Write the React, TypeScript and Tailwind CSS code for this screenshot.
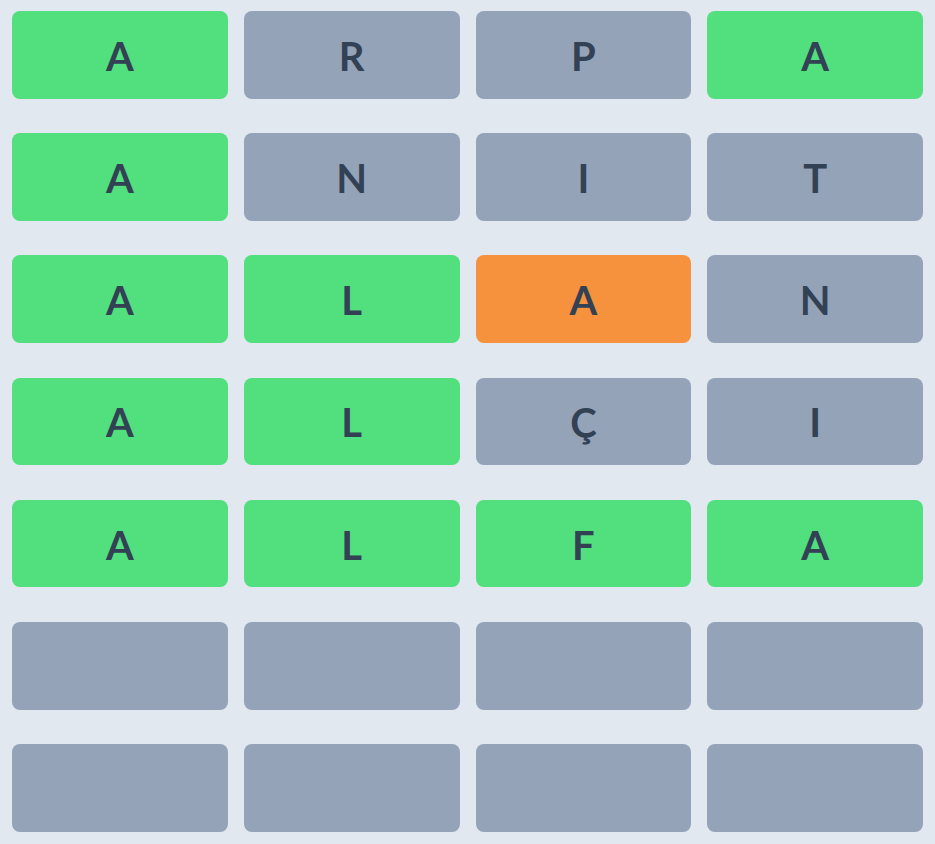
import React from "react";

type Cell = { l: string; c: "g" | "s" | "o" };

const rows: Cell[][] = [
  [{ l: "A", c: "g" }, { l: "R", c: "s" }, { l: "P", c: "s" }, { l: "A", c: "g" }],
  [{ l: "A", c: "g" }, { l: "N", c: "s" }, { l: "I", c: "s" }, { l: "T", c: "s" }],
  [{ l: "A", c: "g" }, { l: "L", c: "g" }, { l: "A", c: "o" }, { l: "N", c: "s" }],
  [{ l: "A", c: "g" }, { l: "L", c: "g" }, { l: "Ç", c: "s" }, { l: "I", c: "s" }],
  [{ l: "A", c: "g" }, { l: "L", c: "g" }, { l: "F", c: "g" }, { l: "A", c: "g" }],
  [{ l: "", c: "s" }, { l: "", c: "s" }, { l: "", c: "s" }, { l: "", c: "s" }],
  [{ l: "", c: "s" }, { l: "", c: "s" }, { l: "", c: "s" }, { l: "", c: "s" }],
];

const bg: Record<Cell["c"], string> = {
  g: "bg-[#52df7e]",
  s: "bg-[#94a3b8]",
  o: "bg-[#f6923e]",
};

export default function App() {
  return (
    <div
      className="min-h-screen w-full bg-[#e2e8f0] px-3 pt-[11px] pb-3"
      style={{ fontFamily: '"Lato", "Noto Sans", sans-serif' }}
    >
      <div className="flex flex-col gap-[34.6px]">
        {rows.map((row, i) => (
          <div key={i} className="grid grid-cols-4 gap-4">
            {row.map((cell, j) => (
              <div
                key={j}
                className={`${bg[cell.c]} h-[87.6px] rounded-lg flex items-center justify-center text-[40px] font-bold text-[#334155] leading-none pt-[2px]`}
              >
                {cell.l}
              </div>
            ))}
          </div>
        ))}
      </div>
    </div>
  );
}
